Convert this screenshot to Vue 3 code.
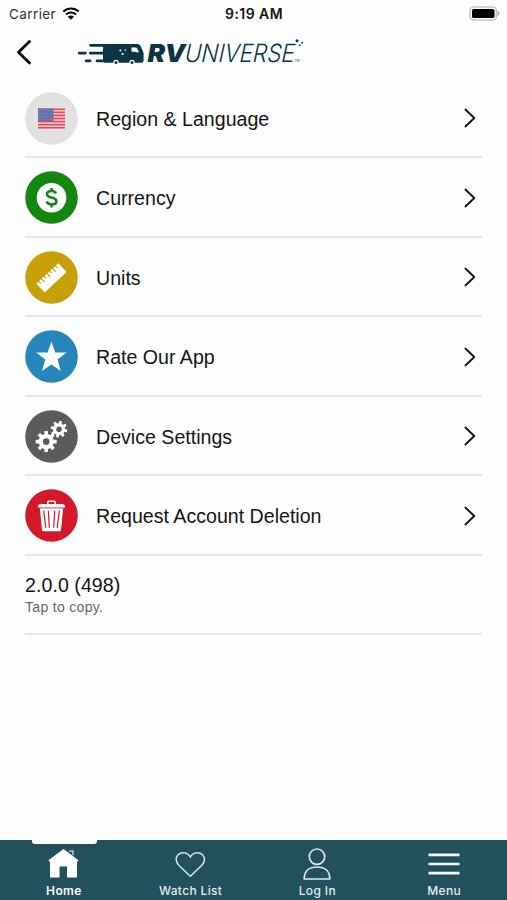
<script setup>
const rows = [
  { id: 'region', label: 'Region & Language', color: '#e1e1e1' },
  { id: 'currency', label: 'Currency', color: '#148711' },
  { id: 'units', label: 'Units', color: '#c6a006' },
  { id: 'rate', label: 'Rate Our App', color: '#2685bb' },
  { id: 'device', label: 'Device Settings', color: '#5b5b5b' },
  { id: 'delete', label: 'Request Account Deletion', color: '#d21829' },
]
const stripes = [0, 1, 2, 3, 4, 5, 6]
const teeth = [0, 45, 90, 135, 180, 225, 270, 315]
const ticks = [0, 1, 2, 3, 4, 5, 6]
const tabs = ['Home', 'Watch List', 'Log In', 'Menu']
</script>

<template>
  <div class="screen">
    <div class="status">
      <span class="carrier">Carrier</span>
      <svg class="wifi" width="18" height="13" viewBox="0 0 18 13">
        <path d="M1.3 4.6a11 11 0 0 1 15.4 0M4 7.5a7.1 7.1 0 0 1 10 0" fill="none" stroke="#080808" stroke-width="2.1" />
        <path d="M9 12.8L5.9 9.7a4.4 4.4 0 0 1 6.2 0z" fill="#080808" />
      </svg>
      <span class="time">9:19 AM</span>
      <svg class="battery" width="31" height="15" viewBox="0 0 31 15">
        <rect x="1" y="1" width="26.5" height="13" rx="4" fill="#fff" stroke="#c6c6c6" stroke-width="1.6" />
        <rect x="3" y="3" width="22.5" height="9" rx="1.6" fill="#000" />
        <path d="M29 5.5q2.2 2 0 4z" fill="#aaa" stroke="#aaa" />
      </svg>
    </div>

    <header class="nav">
      <svg class="back" width="16" height="26" viewBox="0 0 16 26">
        <path d="M13.5 2.5L2.5 13.3L13.5 24" fill="none" stroke="#080808" stroke-width="2.8" stroke-linecap="round" stroke-linejoin="round" />
      </svg>
      <svg class="logo" width="230" height="32" viewBox="76 37 230 32">
        <path d="M103 44H137.5Q139.5 44 140.5 45.8L143.6 53V60.8Q143.6 62.8 141.6 62.8H105Q103 62.8 103 60.8z" fill="#0b3545" />
        <path d="M90.6 45.3H104M90.4 53.1H104M97 60.9H105M79.2 53.1H85.4M86.2 60.9H90" stroke="#0b3545" stroke-width="2.8" stroke-linecap="round" />
        <path d="M131.5 47.4H136.2Q138.6 49.6 138.8 52.6L131.5 51.4z" fill="#fff" />
        <g fill="#0b3545" stroke="#fff" stroke-width="1.2"><circle cx="116" cy="62.4" r="2.1" /><circle cx="132" cy="62.4" r="2.1" /></g>
        <g fill="#fff"><circle cx="120.3" cy="50.6" r="1" /><circle cx="125.3" cy="50" r=".8" /><circle cx="122.6" cy="54" r="1.1" /></g>
        <text x="147.5" y="62.3" class="rv" textLength="38" lengthAdjust="spacingAndGlyphs">RV</text>
        <g transform="translate(184.5 62.3) skewX(-4)">
          <text class="universe" textLength="110" lengthAdjust="spacingAndGlyphs">UNIVERSE</text>
        </g>
        <g fill="#0b3545"><circle cx="297" cy="40.7" r="1.5" /><circle cx="302.2" cy="42.7" r=".9" /><circle cx="299.6" cy="45.2" r=".9" /></g>
        <text x="294.8" y="62.3" class="tm">TM</text>
      </svg>
    </header>

    <main class="list">
      <div v-for="row in rows" :key="row.id" class="row">
        <svg class="disc" width="53" height="53" viewBox="0 0 53 53">
          <circle cx="26.5" cy="26.5" r="26.3" :fill="row.color" />
          <g v-if="row.id === 'region'">
            <rect x="13" y="16.5" width="27" height="20" fill="#f4cbd1" />
            <rect v-for="n in stripes" :key="n" x="13" :y="16.5 + n * 3.08" width="27" height="1.54" fill="#e5465a" />
            <rect x="13" y="16.5" width="15.5" height="12.5" fill="#6770ae" />
            <path d="M14 18.5H28M14 21.5H28M14 24.5H28M14 27.5H28" stroke="#9299c5" stroke-width=".7" stroke-dasharray="1 1.4" />
          </g>
          <g v-else-if="row.id === 'currency'">
            <circle cx="26.5" cy="26.7" r="14.8" fill="#fff" />
            <path d="M31 22.4C30.2 20.8 28.7 20 26.5 20C23.8 20 22 21.3 22 23.2C22 25.4 24 26 26.5 26.6C29.3 27.3 31.4 28 31.4 30.3C31.4 32.3 29.5 33.5 26.7 33.5C24.1 33.5 22.3 32.5 21.5 30.6M26.6 17V20M26.6 33.4V36.4" fill="none" stroke="#148711" stroke-width="2.6" />
          </g>
          <g v-else-if="row.id === 'units'" transform="rotate(-43 26.5 26.5)">
            <rect x="11.3" y="20.6" width="30" height="12.2" rx=".8" fill="#fff" />
            <path v-for="n in ticks" :key="n" :d="`M${14.5 + n * 3.8} 20V${n % 2 ? 25.2 : 23.6}`" stroke="#c6a006" stroke-width="1.1" />
          </g>
          <path v-else-if="row.id === 'rate'" d="M26.4 11.7L30.2 22.4L41.6 22.6L32.5 29.5L35.8 41L26.4 34.4L17 41L20.3 29.5L11.2 22.6L22.6 22.4z" fill="#fff" />
          <g v-else-if="row.id === 'device'">
            <g transform="translate(21.2 31.6)" fill="#fff">
              <rect v-for="a in teeth" :key="a" x="-1.8" y="-10.5" width="3.6" height="5" rx=".5" :transform="`rotate(${a})`" />
              <circle r="5.5" fill="none" stroke="#fff" stroke-width="4.3" />
            </g>
            <g transform="translate(34 19.2) rotate(12)" fill="#fff">
              <rect v-for="a in teeth" :key="a" x="-1.4" y="-8.3" width="2.8" height="4" rx=".5" :transform="`rotate(${a})`" />
              <circle r="4.4" fill="none" stroke="#fff" stroke-width="3.3" />
            </g>
          </g>
          <g v-else>
            <path d="M14.8 19H38.2L36 41.2Q35.9 42.3 34.8 42.3H18.2Q17.1 42.3 17 41.2z" fill="#fff" />
            <path d="M13 18.6V17.4Q13 14.9 16 14.9H37Q40 14.9 40 17.4V18.6z" fill="#fff" />
            <path d="M22.8 15V13Q22.8 12.2 23.6 12.2H29.4Q30.2 12.2 30.2 13V15" fill="none" stroke="#fff" stroke-width="1.5" />
            <path d="M18.7 22.2L20.8 38.3M23.3 22.2L24.3 38.3M29.7 22.2L28.7 38.3M34.3 22.2L32.2 38.3" stroke="#d21829" stroke-width="1.2" stroke-linecap="round" />
            <path d="M15 19.4H38" stroke="#e88790" stroke-width=".7" />
          </g>
        </svg>
        <span class="label">{{ row.label }}</span>
        <svg class="chevron" width="14" height="20" viewBox="0 0 14 20">
          <path d="M2.4 1.5L11.3 10L2.4 18.5" fill="none" stroke="#111" stroke-width="1.8" stroke-linecap="round" stroke-linejoin="round" />
        </svg>
      </div>
      <div class="row version">
        <span class="number">2.0.0 (498)</span>
        <span class="hint">Tap to copy.</span>
      </div>
    </main>

    <nav class="tabs">
      <div v-for="(tab, i) in tabs" :key="tab" class="tab" :class="{ active: i === 0 }">
        <svg width="36" height="36" viewBox="0 0 36 36" fill="none" stroke="#dcebee" stroke-width="1.4">
          <g v-if="i === 0" fill="#fff" stroke="none">
            <path d="M18.5 3L33.5 14.3L32.4 15.6H32V31.5H22V20.5H14.5V31.5H5V15.6H4.2L3.4 14.3z" />
            <path d="M24.2 5.2H28V9.2" fill="none" stroke="#dcebee" stroke-width="1.2" />
          </g>
          <path v-else-if="i === 1" d="M18.3 30.3L7 19.5C3.2 15.7 3.5 11.2 6.1 8.8C9.8 5.4 15.8 6.4 18.3 11C20.8 6.4 26.8 5.4 30.5 8.8C33.1 11.2 33.4 15.7 29.6 19.5z" />
          <g v-else-if="i === 2" stroke-width="1.7">
            <circle cx="18" cy="10.7" r="7.7" />
            <path d="M5.2 33C5.2 25 10.3 21 18 21C25.7 21 30.8 25 30.8 33z" stroke-linejoin="round" />
          </g>
          <path v-else d="M2.5 8.8H33.5M2.5 18H33.5M2.5 27.2H33.5" stroke="#f4fafb" stroke-width="2.7" />
        </svg>
        <span>{{ tab }}</span>
      </div>
    </nav>
  </div>
</template>

<style>
body { background: #fff; }
</style>

<style scoped>
.screen { width: 507px; height: 900px; display: flex; flex-direction: column; background: #fefefe; color: #141414; font-family: "Liberation Sans", Arial, sans-serif; overflow: hidden; }
.status { height: 28px; box-sizing: border-box; display: grid; grid-template-columns: 47px 18px 1fr auto; column-gap: 6px; align-items: center; padding: 0 7px 0 9px; font-family: Inter, sans-serif; font-size: 13.5px; line-height: 28px; }
.carrier { color: #333; letter-spacing: .4px; }
.wifi { margin: -2px 0 0 -.5px; }
.time { font-weight: 600; font-size: 14px; letter-spacing: .45px; margin-left: 139px; }
.battery { margin-top: -1px; }
.nav { height: 51px; display: flex; align-items: flex-start; }
.back { margin: 11px 0 0 16px; }
.logo { margin: 9px 0 0 44px; overflow: visible; }
.rv { font: italic 900 25px Inter, sans-serif; fill: #0b3545; }
.universe { font: italic 300 25px Inter, sans-serif; fill: #0b3545; }
.tm { font: 3px Inter, sans-serif; fill: #0b3545; }
.list { flex: 1; padding: 0 25px; }
.row { height: 79.43px; box-sizing: border-box; border-bottom: 2px solid #e7e7e7; display: flex; align-items: center; padding-top: 1.4px; }
.label { margin-left: 18px; flex: 1; font-size: 19.6px; line-height: 24px; padding-top: 1px; white-space: nowrap; }
.chevron { margin-right: 5px; }
.version { flex-direction: column; align-items: flex-start; justify-content: center; padding-top: 2px; }
.number { font-size: 19.6px; line-height: 24px; letter-spacing: .05px; }
.hint { font-size: 14px; line-height: 20px; letter-spacing: .32px; color: #666; }
.tabs { height: 60px; display: grid; grid-template-columns: repeat(4, 1fr); background: #22505d; }
.tab { position: relative; display: flex; flex-direction: column; align-items: center; padding-top: 5.5px; color: #e2eef0; font-family: Inter, sans-serif; font-size: 12px; font-weight: 500; letter-spacing: .35px; line-height: 18px; }
.tab svg { display: block; }
.tab span { padding-left: 1px; }
.active { color: #fff; font-weight: 600; }
.active::before { content: ""; position: absolute; top: 0; left: 32px; width: 65px; height: 3.5px; background: #fff; border-radius: 0 0 3px 3px; }
</style>
